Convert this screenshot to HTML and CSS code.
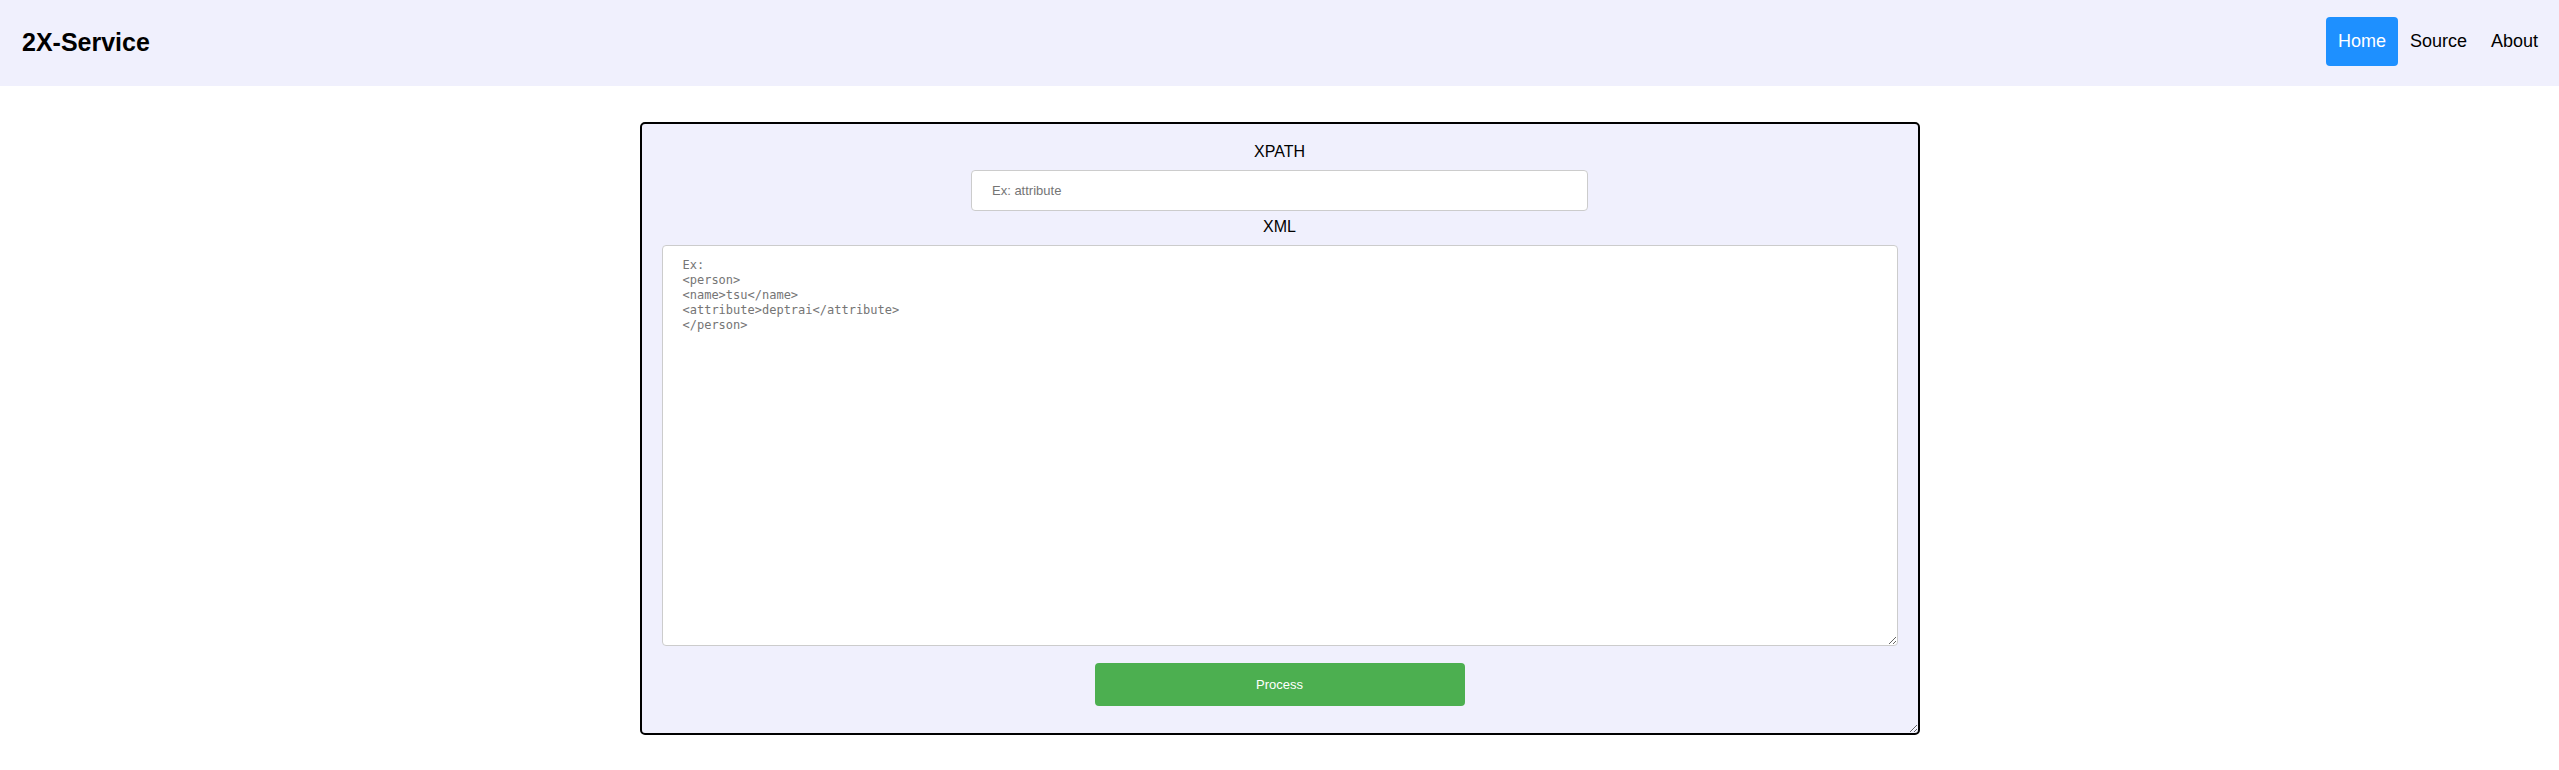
FILE: index.html
```html
<!DOCTYPE html>
<html lang="en">
<head>
<meta charset="utf-8">
<title>2X-Service</title>
<link rel="stylesheet" href="styles.css">
</head>
<body>
<nav class="navbar">
  <div class="brand">2X-Service</div>
  <ul class="nav-links">
    <li><a class="nav-link active" href="#">Home</a></li>
    <li><a class="nav-link" href="#">Source</a></li>
    <li><a class="nav-link" href="#">About</a></li>
  </ul>
</nav>
<main class="main">
  <form class="panel">
    <label class="field-label" for="xpath">XPATH</label>
    <input class="xpath-input" id="xpath" type="text" placeholder="Ex: attribute">
    <label class="field-label xml-label" for="xml">XML</label>
    <textarea class="xml-input" id="xml" placeholder="Ex:&#10;&lt;person&gt;&#10;&lt;name&gt;tsu&lt;/name&gt;&#10;&lt;attribute&gt;deptrai&lt;/attribute&gt;&#10;&lt;/person&gt;"></textarea>
    <button class="process-btn" type="button">Process</button>
  </form>
</main>
</body>
</html>
```

FILE: styles.css
```css
html, body {
  margin: 0;
  padding: 0;
  background: #ffffff;
  font-family: "Liberation Sans", Arial, sans-serif;
  color: #000;
}

.navbar {
  height: 86px;
  background: #f0f0fd;
  display: flex;
  align-items: center;
  justify-content: space-between;
  padding: 0 9px 0 22px;
  box-sizing: border-box;
}

.brand {
  font-size: 25px;
  font-weight: bold;
  margin-top: -2px;
}

.nav-links {
  list-style: none;
  margin: -4px 0 0 0;
  padding: 0;
  display: flex;
}

.nav-link {
  display: block;
  font-size: 18px;
  line-height: 21px;
  padding: 14px 12px;
  color: #000;
  text-decoration: none;
  border-radius: 4px;
}

.nav-link.active {
  background: #1e90ff;
  color: #fff;
}

.main {
  display: flex;
  justify-content: center;
  padding-top: 36px;
}

.panel {
  width: 1280px;
  box-sizing: border-box;
  height: 613px;
  border: 2px solid #000;
  border-radius: 5px;
  background: #f0f0fd;
  padding: 19px 20px 0 20px;
  display: flex;
  flex-direction: column;
  align-items: center;
  resize: both;
  overflow: auto;
}

.field-label {
  font-size: 16px;
  line-height: 18px;
  height: 18px;
}

.xpath-input {
  margin-top: 9px;
  width: 617px;
  height: 41px;
  box-sizing: border-box;
  border: 1px solid #cccccc;
  border-radius: 4px;
  padding: 0 20px;
  font-family: "Liberation Sans", Arial, sans-serif;
  font-size: 13px;
  background: #fff;
  outline: none;
}

.xpath-input::placeholder,
.xml-input::placeholder {
  color: #757575;
}

.xml-label {
  margin-top: 7px;
}

.xml-input {
  margin-top: 9px;
  width: 100%;
  height: 401px;
  box-sizing: border-box;
  border: 1px solid #cccccc;
  border-radius: 4px;
  padding: 12px 20px;
  font-family: "DejaVu Sans Mono", "Liberation Mono", monospace;
  font-size: 12px;
  line-height: 15px;
  background: #fff;
  resize: both;
  outline: none;
}

.process-btn {
  margin-top: 17px;
  width: 370px;
  height: 43px;
  border: none;
  border-radius: 4px;
  background: #4caf50;
  color: #fff;
  font-family: "Liberation Sans", Arial, sans-serif;
  font-size: 13px;
  cursor: pointer;
}
```
